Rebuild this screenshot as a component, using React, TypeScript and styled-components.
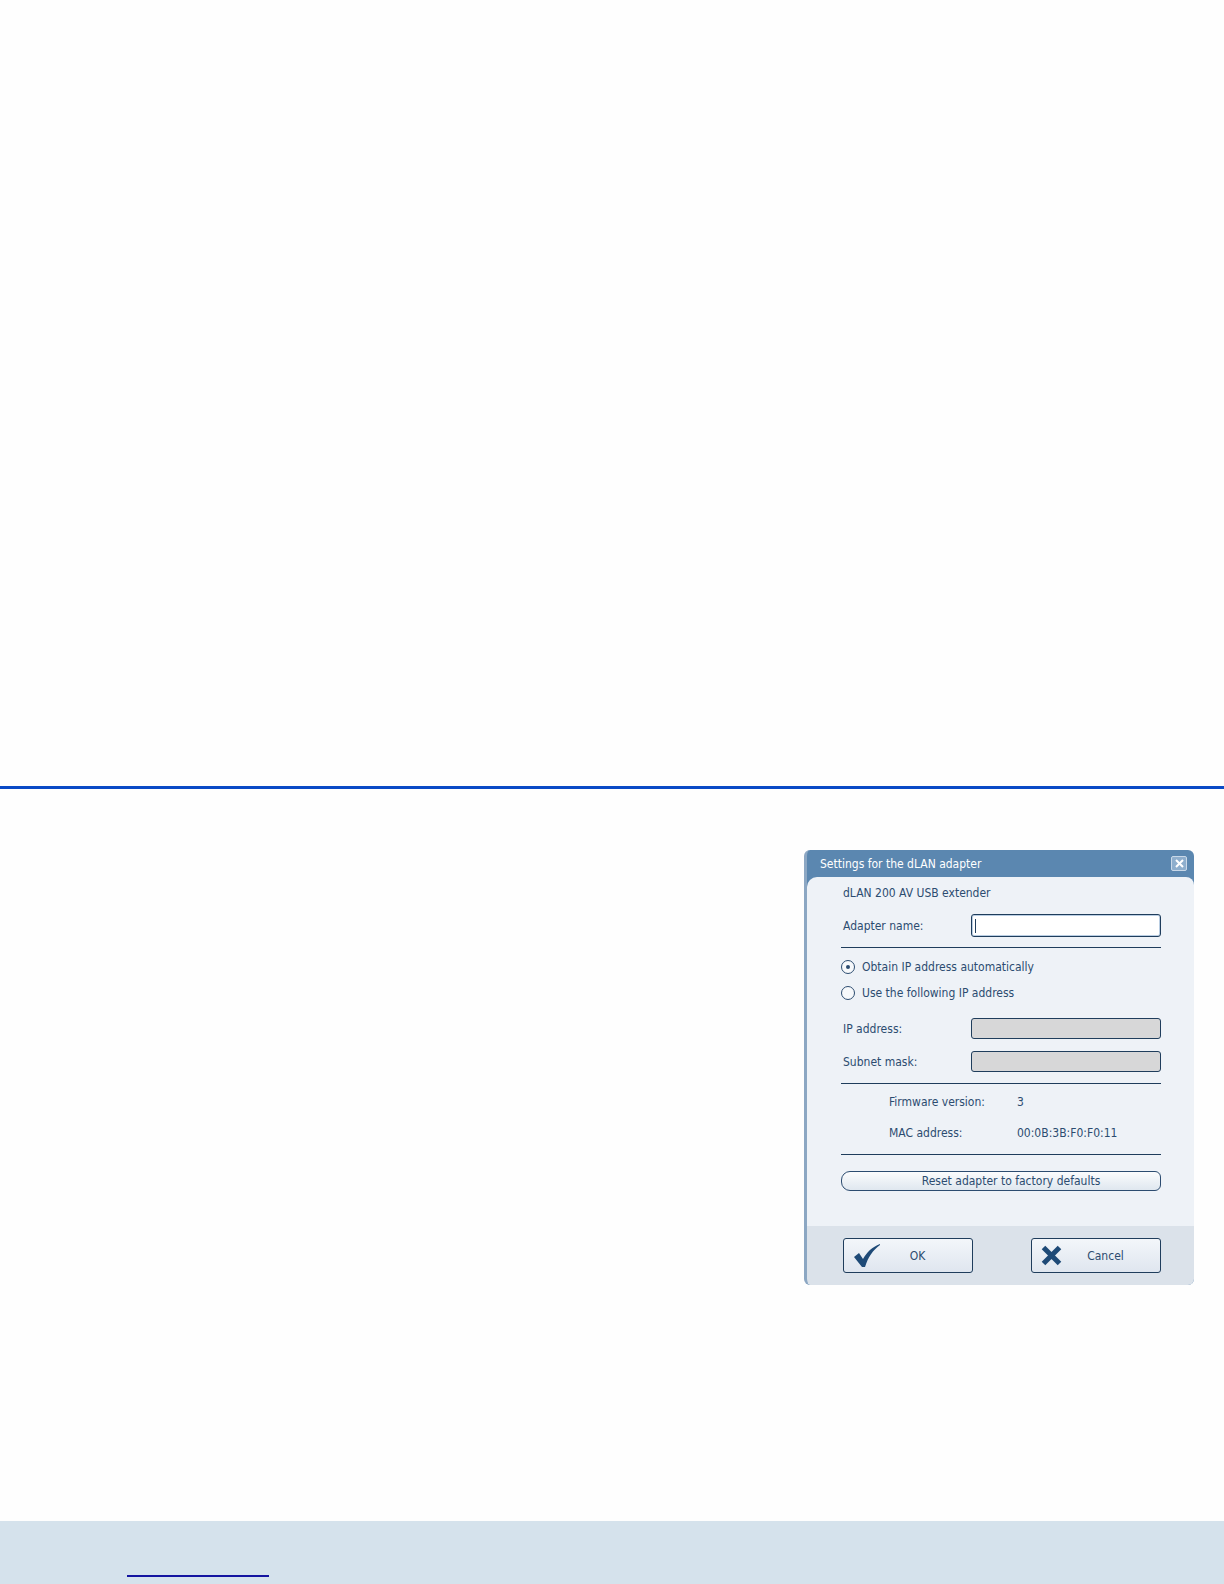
import * as React from 'react';
import styled, { createGlobalStyle } from 'styled-components';

const GlobalStyle = createGlobalStyle`
  html, body {
    margin: 0;
    padding: 0;
    background: #fefefe;
  }
  body {
    font-family: "DejaVu Sans Condensed", "Liberation Sans Narrow", "Liberation Sans", sans-serif;
  }
`;

const Page = styled.div`
  width: 1224px;
  height: 1584px;
  display: flex;
  flex-direction: column;
  overflow: hidden;
`;

const TopSpace = styled.div`
  height: 786px;
  flex: none;
`;

const Rule = styled.div`
  height: 3px;
  flex: none;
  background: #0a4ac6;
`;

const Main = styled.div`
  flex: 1;
  padding: 61px 0 0 804px;
`;

const PageFooter = styled.div`
  height: 63px;
  flex: none;
  background: #d5e2ec;
  padding: 53px 0 0 127px;
  box-sizing: border-box;
`;

const FooterLink = styled.span`
  display: block;
  width: 142px;
  height: 1px;
  border-bottom: 2px solid #1414a0;
`;

const Dialog = styled.div`
  width: 390px;
  height: 435px;
  display: flex;
  flex-direction: column;
  background: #5b87b0;
  border-radius: 6px;
  overflow: hidden;
  box-sizing: border-box;
  border-left: 3px solid #8ca7c3;
  font-size: 12px;
  color: #2c4c70;
`;

const TitleBar = styled.div`
  height: 27px;
  flex: none;
  display: flex;
  align-items: center;
  justify-content: space-between;
  padding: 0 7px 0 13px;
  color: #ffffff;
  font-size: 12px;
`;

const CloseButton = styled.div`
  width: 16px;
  height: 15px;
  box-sizing: border-box;
  border: 1px solid #c9d8e8;
  background: #8eaecd;
  border-radius: 2px;
  display: flex;
  align-items: center;
  justify-content: center;
`;

const Body = styled.div`
  flex: 1;
  background: #eef2f7;
  border-radius: 10px 8px 0 0;
  padding: 8px 33px 0 34px;
  display: flex;
  flex-direction: column;
`;

const Line = styled.div<{ $mt: number }>`
  margin-top: ${p => p.$mt}px;
  height: 16px;
  line-height: 16px;
  display: flex;
  align-items: center;
  padding-left: 2px;
`;

const FieldRow = styled.div<{ $mt: number; $h: number }>`
  margin-top: ${p => p.$mt}px;
  height: ${p => p.$h}px;
  display: flex;
  align-items: center;
`;

const FieldLabel = styled.div`
  width: 130px;
  padding-left: 2px;
  box-sizing: border-box;
`;

const TextField = styled.div<{ $disabled?: boolean }>`
  flex: 1;
  height: 100%;
  box-sizing: border-box;
  border: 1px solid #1f3d5c;
  border-radius: 3px;
  background: ${p => (p.$disabled ? '#d7d7d8' : '#ffffff')};
  box-shadow: ${p => (p.$disabled ? 'none' : 'inset 0 0 0 1px #b9cde2')};
  display: flex;
  align-items: center;
  padding-left: 3px;
`;

const Caret = styled.span`
  width: 1px;
  height: 14px;
  background: #1f3d5c;
`;

const Divider = styled.div<{ $mt: number }>`
  margin-top: ${p => p.$mt}px;
  height: 1px;
  background: #1f3d5c;
`;

const RadioRow = styled.div<{ $mt: number }>`
  margin-top: ${p => p.$mt}px;
  height: 16px;
  display: flex;
  align-items: center;
  gap: 7px;
`;

const RadioCircle = styled.span<{ $checked?: boolean }>`
  width: 14px;
  height: 14px;
  box-sizing: border-box;
  border: 1.5px solid #2c4c70;
  border-radius: 50%;
  background: #f7f9fb;
  display: flex;
  align-items: center;
  justify-content: center;
  &::after {
    content: '';
    width: 4px;
    height: 4px;
    border-radius: 50%;
    background: ${p => (p.$checked ? '#2c4c70' : 'transparent')};
  }
`;

const InfoRow = styled.div<{ $mt: number }>`
  margin-top: ${p => p.$mt}px;
  height: 16px;
  display: flex;
  align-items: center;
  padding-left: 48px;
`;

const InfoLabel = styled.div`
  width: 128px;
`;

const ResetButton = styled.div<{ $mt: number }>`
  margin-top: ${p => p.$mt}px;
  height: 20px;
  box-sizing: border-box;
  border: 1px solid #2c4c70;
  border-radius: 9px 6px 6px 9px;
  background: linear-gradient(#fbfcfd, #dfe7ef);
  display: flex;
  align-items: center;
  justify-content: center;
  padding: 0 0 1px 20px;
`;

const ButtonBar = styled.div`
  height: 59px;
  flex: none;
  background: #dbe2ea;
  box-sizing: border-box;
  padding: 12px 33px 0 36px;
  display: flex;
  justify-content: space-between;
  align-items: flex-start;
`;

const DialogButton = styled.div`
  width: 130px;
  height: 35px;
  box-sizing: border-box;
  border: 1px solid #1f3d5c;
  border-radius: 3px;
  background: linear-gradient(#f3f6fa, #dfe6ef);
  display: flex;
  align-items: center;
  padding: 0 18px 0 9px;
  font-size: 12px;
`;

const ButtonIcon = styled.span`
  width: 28px;
  height: 26px;
  flex: none;
  display: flex;
  align-items: center;
  justify-content: flex-start;
`;

const ButtonLabel = styled.span`
  flex: 1;
  text-align: center;
`;

const CheckIcon = () => (
  <svg width="28" height="26" viewBox="0 0 28 26">
    <path
      d="M1 14 L6 10 L10 16 C14 9 19 4 27 1 L27 2 C20 7 15 14 12 24 L9 24 Z"
      fill="#1e4a77"
    />
  </svg>
);

const CrossIcon = () => (
  <svg width="21" height="21" viewBox="0 0 21 21">
    <path d="M2.5 2.5 L18.5 18.5 M18.5 2.5 L2.5 18.5" stroke="#1e4a77" strokeWidth="5" />
  </svg>
);

const CloseGlyph = () => (
  <svg width="9" height="9" viewBox="0 0 9 9">
    <path d="M1 1 L8 8 M8 1 L1 8" stroke="#ffffff" strokeWidth="2" />
  </svg>
);

export default function App() {
  return (
    <Page>
      <GlobalStyle />
      <TopSpace />
      <Rule />
      <Main>
        <Dialog>
          <TitleBar>
            <span>Settings for the dLAN adapter</span>
            <CloseButton>
              <CloseGlyph />
            </CloseButton>
          </TitleBar>
          <Body>
            <Line $mt={0}>dLAN 200 AV USB extender</Line>
            <FieldRow $mt={13} $h={23}>
              <FieldLabel>Adapter name:</FieldLabel>
              <TextField>
                <Caret />
              </TextField>
            </FieldRow>
            <Divider $mt={10} />
            <RadioRow $mt={11}>
              <RadioCircle $checked />
              <span>Obtain IP address automatically</span>
            </RadioRow>
            <RadioRow $mt={10}>
              <RadioCircle />
              <span>Use the following IP address</span>
            </RadioRow>
            <FieldRow $mt={17} $h={21}>
              <FieldLabel>IP address:</FieldLabel>
              <TextField $disabled />
            </FieldRow>
            <FieldRow $mt={12} $h={21}>
              <FieldLabel>Subnet mask:</FieldLabel>
              <TextField $disabled />
            </FieldRow>
            <Divider $mt={11} />
            <InfoRow $mt={10}>
              <InfoLabel>Firmware version:</InfoLabel>
              <span>3</span>
            </InfoRow>
            <InfoRow $mt={15}>
              <InfoLabel>MAC address:</InfoLabel>
              <span>00:0B:3B:F0:F0:11</span>
            </InfoRow>
            <Divider $mt={13} />
            <ResetButton $mt={16}>Reset adapter to factory defaults</ResetButton>
          </Body>
          <ButtonBar>
            <DialogButton>
              <ButtonIcon>
                <CheckIcon />
              </ButtonIcon>
              <ButtonLabel>OK</ButtonLabel>
            </DialogButton>
            <DialogButton>
              <ButtonIcon>
                <CrossIcon />
              </ButtonIcon>
              <ButtonLabel>Cancel</ButtonLabel>
            </DialogButton>
          </ButtonBar>
        </Dialog>
      </Main>
      <PageFooter>
        <FooterLink />
      </PageFooter>
    </Page>
  );
}
